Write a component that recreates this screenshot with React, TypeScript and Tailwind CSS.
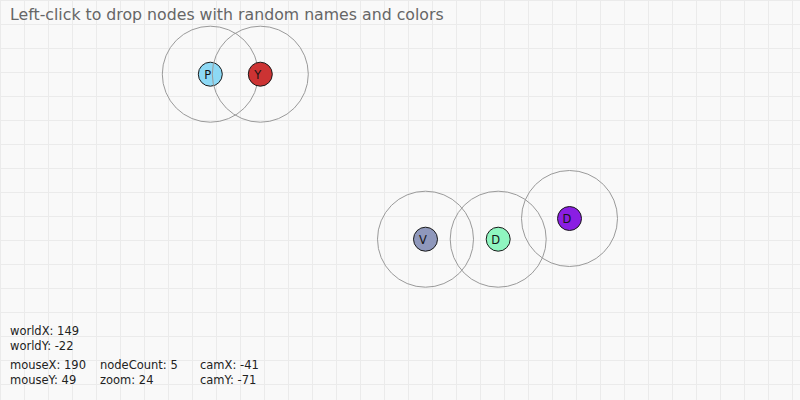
import React from 'react';

type Node = { name: string; x: number; y: number; color: string };

const nodes: Node[] = [
  { name: 'P', x: 210.3, y: 74.2, color: '#8dd9f5' },
  { name: 'Y', x: 260.3, y: 74.2, color: '#cc3333' },
  { name: 'V', x: 425.5, y: 239.2, color: '#8f98bc' },
  { name: 'D', x: 498.2, y: 239.2, color: '#8ff6c0' },
  { name: 'D', x: 569.5, y: 218.5, color: '#8a1ee3' },
];

const stats = [
  ['mouseX: 190', 'nodeCount: 5', 'camX: -41'],
  ['mouseY: 49', 'zoom: 24', 'camY: -71'],
];

const font = '"DejaVu Sans", "Open Sans", sans-serif';

export default function App() {
  return (
    <div
      className="relative w-[800px] h-[400px] overflow-hidden flex flex-col justify-between bg-[#f9f9f9] bg-[linear-gradient(to_right,#ebebeb_1px,transparent_1px),linear-gradient(to_bottom,#ebebeb_1px,transparent_1px)] bg-[size:24px_24px]"
      style={{ fontFamily: font }}
    >
      {/* canvas drawing */}
      <svg className="absolute inset-0" width={800} height={400}>
        {nodes.map((n, i) => (
          <g key={i}>
            <circle cx={n.x} cy={n.y} r={12} fill={n.color} stroke="#1a1a1a" strokeWidth={1} />
            <text
              x={n.x - 2.5}
              y={n.y + 4.5}
              textAnchor="middle"
              fontSize="11.5"
              fill="#151515"
              fontFamily={font}
            >
              {n.name}
            </text>
            <circle cx={n.x} cy={n.y} r={48} fill="none" stroke="#9a9a9a" strokeWidth={1} />
          </g>
        ))}
      </svg>

      <div className="relative pl-[10px] pt-[5px] text-[15.75px] leading-[19px] text-[#666]">
        Left-click to drop nodes with random names and colors
      </div>

      <div className="relative pl-[10px] pb-[13px] text-[11.5px] leading-[14.5px] text-[#222]">
        <div>worldX: 149</div>
        <div>worldY: -22</div>
        <div className="mt-[5px] grid grid-cols-[90px_100px_auto]">
          {stats.map((row) =>
            row.map((s) => <div key={s}>{s}</div>)
          )}
        </div>
      </div>
    </div>
  );
}
